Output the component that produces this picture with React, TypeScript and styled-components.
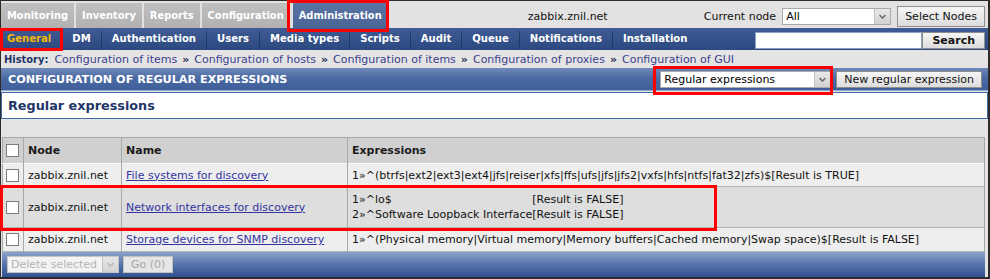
import React from 'react';
import styled, { createGlobalStyle } from 'styled-components';

const Global = createGlobalStyle`
  html, body { margin: 0; padding: 0; background: #fff; }
  body { font-family: "DejaVu Sans", Verdana, sans-serif; font-size: 11px; color: #000; }
  * { box-sizing: border-box; }
`;

const Frame = styled.div`
  position: relative;
  width: 990px;
  height: 279px;
  border: 1px solid #2b2b2b;
  border-right-width: 2px;
  border-bottom-width: 2px;
  background: #e4e4e4;
  display: flex;
  flex-direction: column;
`;

/* ---------- top bar ---------- */
const TopBar = styled.div`
  height: 27px;
  display: flex;
  align-items: center;
  background: #e2e2e2;
`;

const Tabs = styled.div`
  display: flex;
  gap: 2px;
  align-self: flex-end;
`;

const Tab = styled.div<{ $active?: boolean }>`
  height: 25px;
  line-height: 25px;
  padding: 0 6px;
  font-family: "DejaVu Sans Condensed", "DejaVu Sans", sans-serif;
  font-weight: bold;
  font-size: 11px;
  color: #fff;
  background: ${(p) =>
    p.$active ? 'linear-gradient(#5a74a4, #4a6496)' : 'linear-gradient(#c0c0c0, #b1b1b1)'};
  margin-left: ${(p) => (p.$active ? '1px' : '0')};
`;

const Host = styled.div`
  margin-left: 140px;
  font-size: 11px;
  color: #111;
  padding-top: 3px;
`;

const NodeArea = styled.div`
  margin-left: auto;
  display: flex;
  align-items: center;
  gap: 6px;
  padding-right: 3px;
  padding-top: 3px;
`;

const Label = styled.span`
  font-size: 11px;
  color: #111;
`;

/* ---------- select & buttons ---------- */
const SelectBox = styled.div<{ $w: number; $disabled?: boolean }>`
  display: flex;
  width: ${(p) => p.$w}px;
  height: 17px;
  border: 1px solid ${(p) => (p.$disabled ? '#c4c4c4' : '#a9a9a9')};
  background: ${(p) => (p.$disabled ? '#f3f3f3' : '#fff')};
`;

const SelectText = styled.span<{ $disabled?: boolean }>`
  flex: 1;
  padding-left: 3px;
  line-height: 15px;
  font-size: 11px;
  color: ${(p) => (p.$disabled ? '#b4b4b4' : '#000')};
  white-space: nowrap;
  overflow: hidden;
`;

const SelectArrow = styled.span`
  width: 16px;
  background: linear-gradient(#e8e8e8, #d2d2d2);
  border-left: 1px solid #c2c2c2;
  display: flex;
  align-items: center;
  justify-content: center;
`;

const Button = styled.button<{ $h?: number; $bold?: boolean; $disabled?: boolean; $pad?: number }>`
  height: ${(p) => p.$h ?? 17}px;
  padding: 0 ${(p) => p.$pad ?? 7}px;
  font-family: "DejaVu Sans", Verdana, sans-serif;
  font-size: 11px;
  font-weight: ${(p) => (p.$bold ? 'bold' : 'normal')};
  color: ${(p) => (p.$disabled ? '#a8a8a8' : '#111')};
  border: 1px solid ${(p) => (p.$disabled ? '#c0c0c0' : '#8f8f8f')};
  background: ${(p) => (p.$disabled ? '#e6e6e6' : 'linear-gradient(#f6f6f6, #dcdcdc)')};
  border-radius: 0;
  white-space: nowrap;
`;

const Chevron = ({ color = '#6f6f6f' }: { color?: string }) => (
  <svg width="9" height="7" viewBox="0 0 9 7">
    <path d="M1.5 2 L4.5 5 L7.5 2" fill="none" stroke={color} strokeWidth="1.6" />
  </svg>
);

const Select = ({ w, text, disabled }: { w: number; text: string; disabled?: boolean }) => (
  <SelectBox $w={w} $disabled={disabled}>
    <SelectText $disabled={disabled}>{text}</SelectText>
    <SelectArrow>
      <Chevron color={disabled ? '#b8b8b8' : '#6f6f6f'} />
    </SelectArrow>
  </SelectBox>
);

/* ---------- sub nav ---------- */
const SubNav = styled.div`
  height: 22px;
  display: flex;
  align-items: center;
  background: linear-gradient(#3f5c94, #2c4880);
`;

const SubItem = styled.span<{ $active?: boolean }>`
  padding: 0 10px;
  line-height: 16px;
  font-family: "DejaVu Sans Condensed", "DejaVu Sans", sans-serif;
  font-weight: bold;
  font-size: 11.2px;
  color: ${(p) => (p.$active ? '#f2b705' : '#fff')};
  border-left: 1px solid rgba(20, 35, 70, 0.55);
  &:first-child {
    border-left: none;
    padding-left: 6px;
  }
`;

const SearchForm = styled.div`
  margin-left: auto;
  margin-right: 3px;
  display: flex;
  margin-top: 2px;
`;

const SearchInput = styled.div`
  width: 167px;
  height: 17px;
  background: #fff;
  border: 1px solid #8aa0c4;
`;

/* ---------- history ---------- */
const History = styled.div`
  height: 18px;
  line-height: 19px;
  padding-left: 3px;
  font-size: 11px;
  white-space: nowrap;
  overflow: hidden;
`;

const HistLabel = styled.b`
  font-family: "DejaVu Sans Condensed", "DejaVu Sans", sans-serif;
  color: #1f3667;
  margin-right: 6px;
`;

const HistLink = styled.span`
  color: #3b418e;
`;

const HistSep = styled.b`
  color: #1f2a55;
  margin: 0 5px;
`;

/* ---------- header bar ---------- */
const HeaderBar = styled.div`
  height: 23px;
  display: flex;
  align-items: center;
  padding: 0 6px 0 7px;
  background: linear-gradient(#7089ba, #4b6aa3 45%, #3f5f9b);
  border-bottom: 1px solid #94a9cf;
`;

const HeaderTitle = styled.span`
  color: #fff;
  font-weight: bold;
  font-size: 11.2px;
  flex: 1;
`;

const HeaderActions = styled.div`
  display: flex;
  align-items: center;
  gap: 5px;
`;

const TitleBox = styled.div`
  margin-top: 1px;
  height: 27px;
  background: #fff;
  border: 1px solid #3e6aa5;
  display: flex;
  align-items: center;
  padding-left: 6px;
  font-size: 12.8px;
  font-weight: bold;
  color: #1e3567;
`;

/* ---------- table ---------- */
const Table = styled.table`
  margin: 18px 0 0 1px;
  width: 983px;
  border-collapse: collapse;
  border: 1px solid #a8a8a8;
  border-bottom: none;
  font-size: 11px;
`;

const HeadRow = styled.tr`
  height: 26px;
  background: #d0d0d0;
`;

const Row = styled.tr<{ $alt?: boolean; $h: number }>`
  height: ${(p) => p.$h}px;
  background: ${(p) => (p.$alt ? '#dedede' : '#eeeeee')};
  border-top: 1px solid #fafafa;
  border-bottom: 1px solid #b4b4b4;
`;

const Th = styled.th<{ $w?: number }>`
  width: ${(p) => (p.$w ? `${p.$w}px` : 'auto')};
  text-align: left;
  padding: 0 4px;
  font-weight: bold;
  color: #1c1c1c;
  border-right: 1px solid #a8a8a8;
`;

const Td = styled.td`
  padding: 0 4px;
  color: #111;
  border-right: 1px solid #a8a8a8;
  white-space: nowrap;
`;

const CheckCell = styled.td`
  padding: 0 0 0 3px;
  border-right: 1px solid #a8a8a8;
`;

const CheckTh = styled.th`
  width: 21px;
  padding: 0 0 0 3px;
  text-align: left;
  border-right: 1px solid #a8a8a8;
`;

const Check = styled.span`
  display: block;
  width: 13px;
  height: 13px;
  background: #fff;
  border: 1px solid #7d7d7d;
`;

const Link = styled.a`
  color: #3434a0;
  text-decoration: underline;
`;

const ExprTable = styled.table`
  border-collapse: collapse;
  font-size: 11px;
  td {
    padding: 0;
    line-height: 15px;
    white-space: nowrap;
  }
`;

/* ---------- footer ---------- */
const Footer = styled.div`
  margin-left: 1px;
  width: 983px;
  height: 25px;
  display: flex;
  align-items: center;
  gap: 4px;
  padding-left: 5px;
  background: linear-gradient(#8ca2ca, #5674ab 50%, #2f5092);
`;

/* ---------- annotation marks ---------- */
const Mark = styled.div<{ $x: number; $y: number; $w: number; $h: number }>`
  position: absolute;
  left: ${(p) => p.$x}px;
  top: ${(p) => p.$y}px;
  width: ${(p) => p.$w}px;
  height: ${(p) => p.$h}px;
  border: 3px solid #ff0000;
  pointer-events: none;
`;

const tabs = ['Monitoring', 'Inventory', 'Reports', 'Configuration'];
const sub = [
  'General',
  'DM',
  'Authentication',
  'Users',
  'Media types',
  'Scripts',
  'Audit',
  'Queue',
  'Notifications',
  'Installation',
];
const history = [
  'Configuration of items',
  'Configuration of hosts',
  'Configuration of items',
  'Configuration of proxies',
  'Configuration of GUI',
];

export default function App() {
  return (
    <>
      <Global />
      <Frame>
        <TopBar>
          <Tabs>
            {tabs.map((t) => (
              <Tab key={t}>{t}</Tab>
            ))}
            <Tab $active>Administration</Tab>
          </Tabs>
          <Host>zabbix.znil.net</Host>
          <NodeArea>
            <Label>Current node</Label>
            <Select w={109} text="All" />
            <Button $h={21}>Select Nodes</Button>
          </NodeArea>
        </TopBar>

        <SubNav>
          {sub.map((s, i) => (
            <SubItem key={s} $active={i === 0}>
              {s}
            </SubItem>
          ))}
          <SearchForm>
            <SearchInput />
            <Button $bold $pad={9}>Search</Button>
          </SearchForm>
        </SubNav>

        <History>
          <HistLabel>History:</HistLabel>
          {history.map((h, i) => (
            <React.Fragment key={i}>
              {i > 0 && <HistSep>»</HistSep>}
              <HistLink>{h}</HistLink>
            </React.Fragment>
          ))}
        </History>

        <HeaderBar>
          <HeaderTitle>CONFIGURATION OF REGULAR EXPRESSIONS</HeaderTitle>
          <HeaderActions>
            <Select w={171} text="Regular expressions" />
            <Button>New regular expression</Button>
          </HeaderActions>
        </HeaderBar>

        <TitleBox>Regular expressions</TitleBox>

        <Table>
          <thead>
            <HeadRow>
              <CheckTh>
                <Check />
              </CheckTh>
              <Th $w={98}>Node</Th>
              <Th $w={226}>Name</Th>
              <Th>Expressions</Th>
            </HeadRow>
          </thead>
          <tbody>
            <Row $h={23}>
              <CheckCell>
                <Check />
              </CheckCell>
              <Td>zabbix.znil.net</Td>
              <Td>
                <Link>File systems for discovery</Link>
              </Td>
              <Td>1»^(btrfs|ext2|ext3|ext4|jfs|reiser|xfs|ffs|ufs|jfs|jfs2|vxfs|hfs|ntfs|fat32|zfs)$[Result is TRUE]</Td>
            </Row>
            <Row $h={41} $alt>
              <CheckCell>
                <Check />
              </CheckCell>
              <Td>zabbix.znil.net</Td>
              <Td>
                <Link>Network interfaces for discovery</Link>
              </Td>
              <Td>
                <ExprTable>
                  <tbody>
                    <tr>
                      <td>1»^lo$</td>
                      <td>[Result is FALSE]</td>
                    </tr>
                    <tr>
                      <td>2»^Software Loopback Interface</td>
                      <td>[Result is FALSE]</td>
                    </tr>
                  </tbody>
                </ExprTable>
              </Td>
            </Row>
            <Row $h={24}>
              <CheckCell>
                <Check />
              </CheckCell>
              <Td>zabbix.znil.net</Td>
              <Td>
                <Link>Storage devices for SNMP discovery</Link>
              </Td>
              <Td>1»^(Physical memory|Virtual memory|Memory buffers|Cached memory|Swap space)$[Result is FALSE]</Td>
            </Row>
          </tbody>
        </Table>

        <Footer>
          <Select w={112} text="Delete selected" disabled />
          <Button $disabled>Go (0)</Button>
        </Footer>

        <Mark $x={286} $y={-1} $w={102} $h={32} />
        <Mark $x={-1} $y={27} $w={63} $h={23} />
        <Mark $x={652} $y={65} $w={180} $h={29} />
        <Mark $x={-1} $y={184} $w={717} $h={46} />
      </Frame>
    </>
  );
}
